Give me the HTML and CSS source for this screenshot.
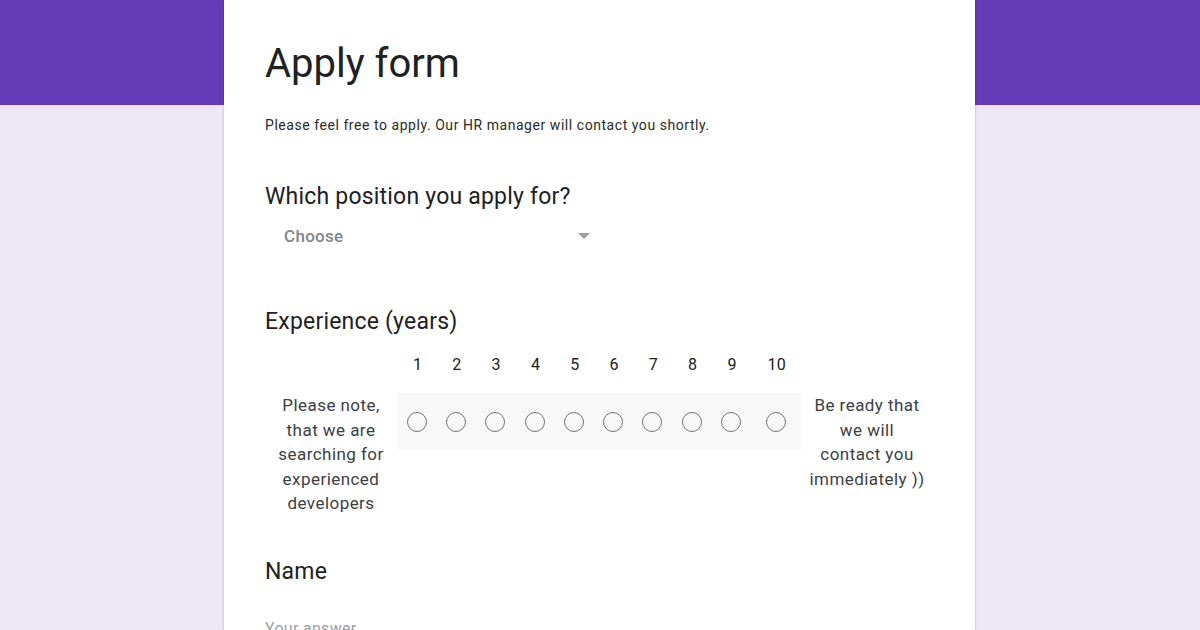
FILE: index.html
```html
<!DOCTYPE html>
<html lang="en">
<head>
    <meta charset="UTF-8">
    <meta name="viewport" content="width=device-width, initial-scale=1.0">
    <title>Apply form</title>
    <link rel="stylesheet" href="styles.css">
</head>
<body>
    <div class="form-card">
        <h1 class="form-title">Apply form</h1>
        <p class="form-desc">Please feel free to apply. Our HR manager will contact you shortly.</p>

        <div class="question q-position">
            <h2 class="q-title">Which position you apply for?</h2>
            <div class="dropdown">
                <span class="dropdown-text">Choose</span>
                <span class="dropdown-arrow"></span>
            </div>
        </div>

        <div class="question q-experience">
            <h2 class="q-title">Experience (years)</h2>
            <div class="scale">
                <div class="scale-numbers">
                    <span>1</span><span>2</span><span>3</span><span>4</span><span>5</span>
                    <span>6</span><span>7</span><span>8</span><span>9</span><span>10</span>
                </div>
                <div class="scale-body">
                    <div class="scale-label">Please note,<br>that we are<br>searching for<br>experienced<br>developers</div>
                    <div class="scale-radios">
                        <span><i class="radio"></i></span><span><i class="radio"></i></span>
                        <span><i class="radio"></i></span><span><i class="radio"></i></span>
                        <span><i class="radio"></i></span><span><i class="radio"></i></span>
                        <span><i class="radio"></i></span><span><i class="radio"></i></span>
                        <span><i class="radio"></i></span><span><i class="radio"></i></span>
                    </div>
                    <div class="scale-label">Be ready that<br>we will<br>contact you<br>immediately ))</div>
                </div>
            </div>
        </div>

        <div class="question q-name">
            <h2 class="q-title">Name</h2>
            <div class="answer">Your answer</div>
        </div>
    </div>
</body>
</html>
```

FILE: styles.css
```css
body {
    margin: 0;
    padding: 0;
    font-family: Roboto, "Liberation Sans", Arial, sans-serif;
    color: #202124;
    background: linear-gradient(to bottom, #673ab7 0, #673ab7 105px, #ede7f6 105px);
    height: 630px;
    overflow: hidden;
}

.form-card {
    width: 751px;
    height: 630px;
    margin-left: 224px;
    box-sizing: border-box;
    padding: 40px 41px 0;
    background: #fff;
    overflow: hidden;
    box-shadow: 0 0 2px rgba(0, 0, 0, 0.18), 0 1px 3px rgba(0, 0, 0, 0.1);
}

.form-title {
    margin: 0;
    font-size: 40px;
    line-height: 48px;
    font-weight: 400;
}

.form-desc {
    margin: 27px 0 0;
    font-size: 14px;
    line-height: 20px;
    letter-spacing: 0.55px;
    color: #2b2b2b;
}

.q-title {
    margin: 0;
    font-size: 23px;
    line-height: 30px;
    font-weight: 400;
    letter-spacing: 0.2px;
}

.q-position {
    margin-top: 47px;
}

.dropdown {
    display: flex;
    justify-content: space-between;
    align-items: center;
    width: 306px;
    margin-top: 12px;
    padding-left: 19px;
}

.dropdown-text {
    font-size: 17px;
    line-height: 24px;
    font-weight: 500;
    letter-spacing: 0.3px;
    color: #80868b;
}

.dropdown-arrow {
    width: 0;
    height: 0;
    border-left: 6px solid transparent;
    border-right: 6px solid transparent;
    border-top: 6px solid #9e9e9e;
}

.q-experience {
    margin-top: 59px;
}

.scale {
    margin-top: 16px;
}

.scale-numbers,
.scale-radios {
    display: grid;
    grid-template-columns: repeat(9, 39.3px) 50px;
    justify-items: center;
    align-items: center;
}

.scale-numbers {
    margin-left: 133px;
    font-size: 16px;
    line-height: 24px;
    letter-spacing: 0.3px;
}

.scale-body {
    display: flex;
    align-items: flex-start;
    margin-top: 16px;
}

.scale-label {
    width: 132px;
    flex-shrink: 0;
    text-align: center;
    font-size: 17px;
    line-height: 24.5px;
    letter-spacing: 0.45px;
    color: #3c4043;
}

.scale-radios {
    width: 404px;
    height: 57px;
    flex-shrink: 0;
    background: #f8f8f8;
}

.radio {
    display: block;
    width: 18px;
    height: 18px;
    border: 1.5px solid #5f6368;
    border-radius: 50%;
    opacity: 0.9;
}

.q-name {
    margin-top: 41px;
}

.answer {
    margin-top: 30px;
    font-size: 16px;
    line-height: 24px;
    letter-spacing: 0.3px;
    color: #9aa0a6;
}
```
